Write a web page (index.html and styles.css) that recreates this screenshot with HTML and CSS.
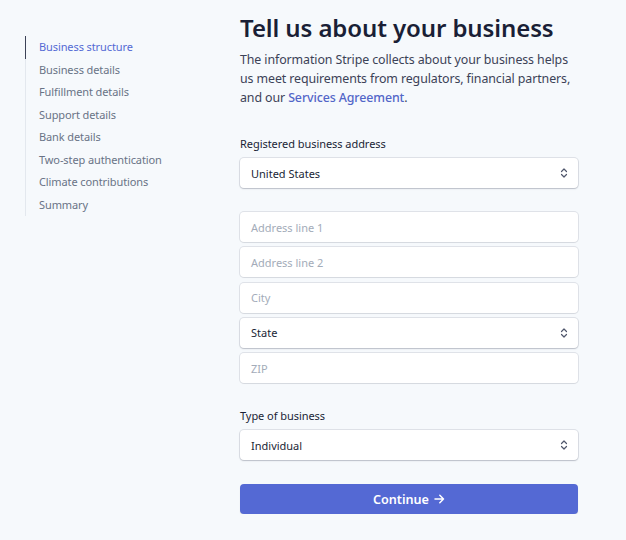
FILE: index.html
```html
<!DOCTYPE html>
<html lang="en">
<head>
<meta charset="utf-8">
<title>Tell us about your business</title>
<link rel="stylesheet" href="styles.css">
</head>
<body>
<div class="page">
  <nav class="sidebar">
    <a class="nav-item active">Business structure</a>
    <a class="nav-item">Business details</a>
    <a class="nav-item">Fulfillment details</a>
    <a class="nav-item">Support details</a>
    <a class="nav-item">Bank details</a>
    <a class="nav-item">Two-step authentication</a>
    <a class="nav-item">Climate contributions</a>
    <a class="nav-item">Summary</a>
  </nav>
  <main class="main">
    <h1 class="title">Tell us about your business</h1>
    <p class="intro">The information Stripe collects about your business helps us meet requirements from regulators, financial partners, and our <a class="link">Services Agreement</a>.</p>

    <div class="label label-first">Registered business address</div>
    <div class="field select"><span class="value">United States</span><svg class="chev" viewBox="0 0 8 12" width="8" height="12"><path d="M1.5 4.5 L4 2 L6.5 4.5 M1.5 7.5 L4 10 L6.5 7.5" fill="none" stroke="#4f566b" stroke-width="1.2" stroke-linecap="round" stroke-linejoin="round"/></svg></div>

    <div class="address">
      <div class="field input"><span class="ph">Address line 1</span></div>
      <div class="field input"><span class="ph">Address line 2</span></div>
      <div class="field input"><span class="ph">City</span></div>
      <div class="field select"><span class="value">State</span><svg class="chev" viewBox="0 0 8 12" width="8" height="12"><path d="M1.5 4.5 L4 2 L6.5 4.5 M1.5 7.5 L4 10 L6.5 7.5" fill="none" stroke="#4f566b" stroke-width="1.2" stroke-linecap="round" stroke-linejoin="round"/></svg></div>
      <div class="field input"><span class="ph">ZIP</span></div>
    </div>

    <div class="label label-type">Type of business</div>
    <div class="field select"><span class="value">Individual</span><svg class="chev" viewBox="0 0 8 12" width="8" height="12"><path d="M1.5 4.5 L4 2 L6.5 4.5 M1.5 7.5 L4 10 L6.5 7.5" fill="none" stroke="#4f566b" stroke-width="1.2" stroke-linecap="round" stroke-linejoin="round"/></svg></div>

    <button class="continue"><span>Continue</span><svg class="arrow" viewBox="0 0 11 10" width="11" height="10"><path d="M1 5 H9.5 M5.8 1.3 L9.5 5 L5.8 8.7" fill="none" stroke="#fff" stroke-width="1.5" stroke-linecap="round" stroke-linejoin="round"/></svg></button>
  </main>
</div>
</body>
</html>
```

FILE: styles.css
```css
* { box-sizing: border-box; }
html, body {
  margin: 0;
  padding: 0;
  background: #f6f9fc;
  font-family: "Noto Sans", "Open Sans", sans-serif;
  color: #1a1f36;
}
.page {
  display: flex;
  align-items: flex-start;
  padding-left: 25px;
}
.sidebar {
  width: 215px;
  flex: none;
  margin-top: 36px;
  display: flex;
  flex-direction: column;
}
.nav-item {
  display: block;
  font-size: 11px;
  letter-spacing: -0.1px;
  line-height: 22.5px;
  padding-left: 13px;
  color: #697386;
  border-left: 1px solid #e3e8ee;
}
.nav-item.active {
  color: #5469d4;
  border-left: 1px solid #3c4257;
}
.main {
  width: 338px;
  flex: none;
  padding-top: 13px;
}
.title {
  margin: 0;
  font-size: 24px;
  letter-spacing: -0.1px;
  line-height: 30px;
  font-weight: 600;
  color: #1a1f36;
}
.intro {
  margin: 7px 0 0;
  font-size: 12.4px;
  letter-spacing: -0.1px;
  line-height: 19px;
  color: #3c4257;
}
.link {
  color: #5266c8;
  font-weight: 500;
}
.label {
  font-size: 11px;
  letter-spacing: -0.05px;
  line-height: 16px;
  color: #1a1f36;
  margin-bottom: 6px;
}
.label-first { margin-top: 29px; }
.label-type { margin-top: 25px; }
.field {
  height: 30px;
  background: #fff;
  border-radius: 4px;
  display: flex;
  align-items: center;
  justify-content: space-between;
  padding: 0 10px 0 11px;
  font-size: 11px;
}
.select {
  box-shadow: 0 0 0 1px rgba(60, 66, 87, 0.12), 0 1px 1.5px rgba(60, 66, 87, 0.22);
}
.input {
  box-shadow: 0 0 0 1px rgba(60, 66, 87, 0.12), 0 1px 1px rgba(60, 66, 87, 0.06);
}
.value { color: #1a1f36; }
.ph { color: #a3acb9; }
.address {
  margin-top: 24px;
  display: flex;
  flex-direction: column;
  gap: 5.25px;
}
.continue {
  display: flex;
  align-items: center;
  justify-content: center;
  gap: 5px;
  width: 100%;
  height: 30px;
  margin-top: 24px;
  border: none;
  border-radius: 4px;
  background: #5469d4;
  color: #fff;
  font-family: inherit;
  font-size: 12.6px;
  font-weight: 600;
  box-shadow: 0 1px 1px rgba(0, 0, 0, 0.12);
}
```
